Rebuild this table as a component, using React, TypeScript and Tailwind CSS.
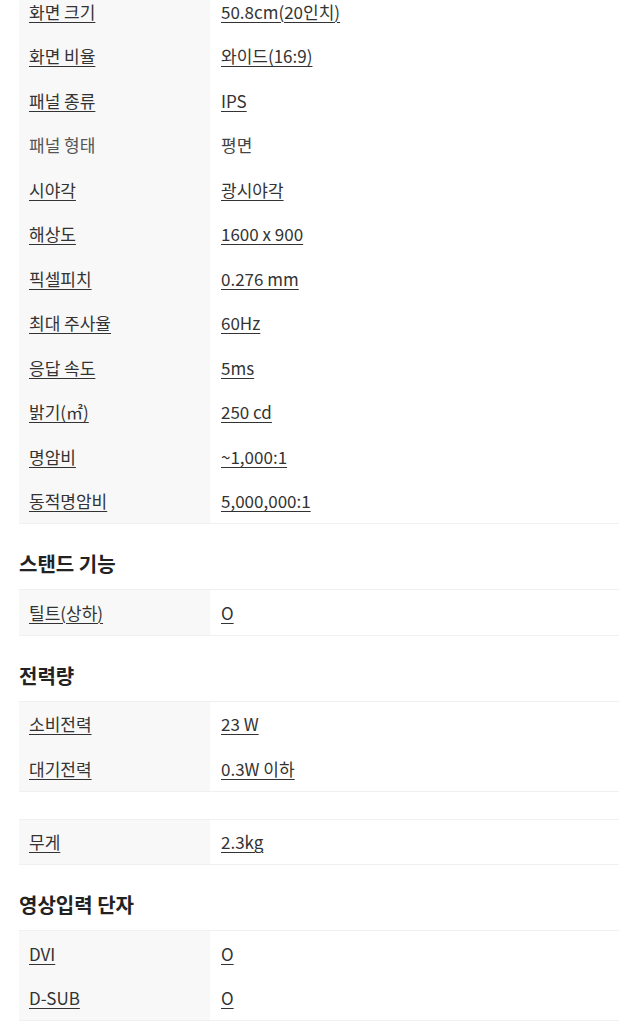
import React from "react";

type Row = { k: string; v: string; plain?: boolean };

const main: Row[] = [
  { k: "화면 크기", v: "50.8cm(20인치)" },
  { k: "화면 비율", v: "와이드(16:9)" },
  { k: "패널 종류", v: "IPS" },
  { k: "패널 형태", v: "평면", plain: true },
  { k: "시야각", v: "광시야각" },
  { k: "해상도", v: "1600 x 900" },
  { k: "픽셀피치", v: "0.276 mm" },
  { k: "최대 주사율", v: "60Hz" },
  { k: "응답 속도", v: "5ms" },
  { k: "밝기(㎡)", v: "250 cd" },
  { k: "명암비", v: "~1,000:1" },
  { k: "동적명암비", v: "5,000,000:1" },
];

function Table({ rows, className = "" }: { rows: Row[]; className?: string }) {
  return (
    <div className={"border-y border-[#f0f0f0] " + className}>
      {rows.map((r) => (
        <div key={r.k} className="flex h-[44.5px]">
          <div className="w-[191px] shrink-0 bg-[#f8f8f8] flex items-center pl-[10px]">
            <span
              className={
                r.plain
                  ? "text-[#555]"
                  : "text-[#333] underline underline-offset-[3px] decoration-[1px]"
              }
            >
              {r.k}
            </span>
          </div>
          <div className="flex-1 flex items-center pl-[11px]">
            <span
              className={
                r.plain
                  ? "text-[#444]"
                  : "text-[#333] underline underline-offset-[3px] decoration-[1px]"
              }
            >
              {r.v}
            </span>
          </div>
        </div>
      ))}
    </div>
  );
}

function Heading({ children }: { children: React.ReactNode }) {
  return (
    <div className="mt-[27px] mb-[12px] h-[26px] flex items-center text-[20px] font-bold text-[#222] leading-none">
      {children}
    </div>
  );
}

export default function App() {
  return (
    <div
      className="w-[633px] h-[1024px] overflow-hidden bg-white pl-[19px] pr-[14px] text-[17px] leading-none"
      style={{ fontFamily: '"Noto Sans CJK KR", "Noto Sans", sans-serif' }}
    >
      <Table rows={main} className="-mt-[11px] border-t-0" />
      <Heading>스탠드 기능</Heading>
      <Table rows={[{ k: "틸트(상하)", v: "O" }]} />
      <Heading>전력량</Heading>
      <Table
        rows={[
          { k: "소비전력", v: "23 W" },
          { k: "대기전력", v: "0.3W 이하" },
        ]}
      />
      <Table rows={[{ k: "무게", v: "2.3kg" }]} className="mt-[27px]" />
      <Heading>영상입력 단자</Heading>
      <Table
        rows={[
          { k: "DVI", v: "O" },
          { k: "D-SUB", v: "O" },
        ]}
      />
    </div>
  );
}
